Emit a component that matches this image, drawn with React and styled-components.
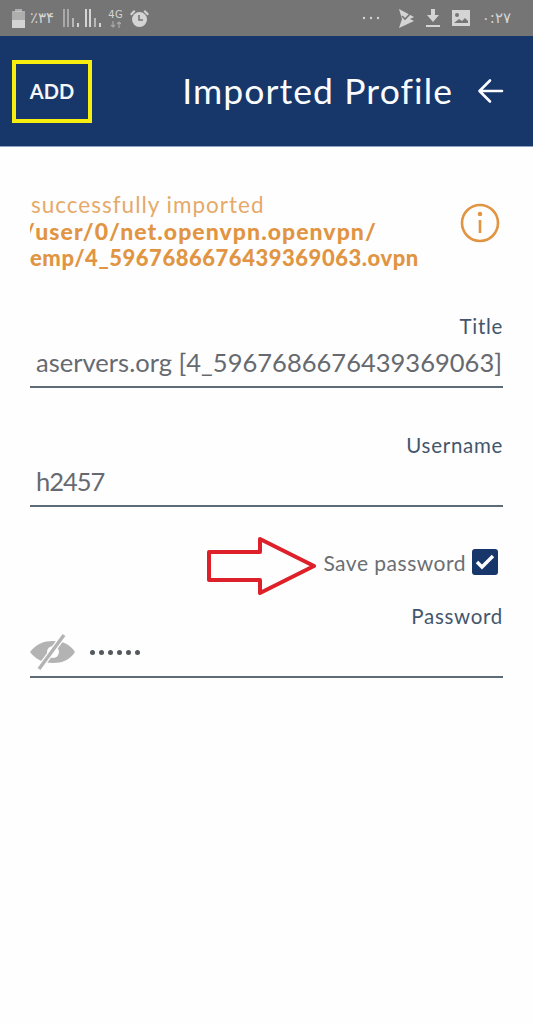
import styled, { createGlobalStyle } from "styled-components";

const GlobalStyle = createGlobalStyle`
    html, body {
        margin: 0;
        padding: 0;
        background: #fefefe;
    }
    body {
        font-family: "Lato", "Open Sans", sans-serif;
    }
`;

const Screen = styled.div`
    width: 533px;
    height: 1024px;
    overflow: hidden;
    background: #fefefe;
`;

const StatusBar = styled.div`
    height: 36px;
    background: #757575;
    display: flex;
    align-items: center;
    justify-content: space-between;
    padding: 0 22px 0 12px;
    box-sizing: border-box;
    color: #d4d4d4;
`;

const StatusGroup = styled.div`
    display: flex;
    align-items: center;
    gap: ${({ gap }) => gap || 7}px;
`;

const StatusText = styled.span`
    font-family: "DejaVu Sans", sans-serif;
    font-size: 15px;
    line-height: 16px;
    text-align: center;
    letter-spacing: 0.6px;
`;

const BatteryLabel = styled(StatusText)`
    margin: 0 2px 0 -2px;
    letter-spacing: 1px;
`;

const NetworkType = styled.span`
    display: flex;
    flex-direction: column;
    align-items: center;
    font-family: "DejaVu Sans", sans-serif;
`;

const NetworkLabel = styled.span`
    font-size: 10px;
    line-height: 12px;
    letter-spacing: 0.5px;
`;

const NetworkArrows = styled.svg`
    width: 12px;
    height: 7px;
`;

const MoreDots = styled.span`
    display: flex;
    margin-right: 7px;
`;

const Header = styled.header`
    height: 110px;
    background: #17376a;
    border-bottom: 1px solid #8ea2c4;
    display: flex;
    align-items: center;
    padding: 0 29px 0 12px;
    color: #fafcff;
`;

const AddButton = styled.button`
    width: 80px;
    height: 63px;
    box-sizing: border-box;
    margin: 0;
    padding: 0;
    background: none;
    border: 4px solid #f7ee10;
    color: #f4f6fa;
    font-family: "Lato", sans-serif;
    font-size: 20px;
    font-weight: 700;
    letter-spacing: 0.1px;
`;

const HeaderTitle = styled.h1`
    margin: 0 0 0 auto;
    font-size: 35.5px;
    font-weight: 400;
    line-height: 40px;
    letter-spacing: 1.1px;
`;

const BackIcon = styled.svg`
    width: 27px;
    height: 28px;
    margin-left: 24px;
    flex: none;
`;

const Content = styled.main`
    padding: 44px 30px 0;
`;

const Notice = styled.div`
    display: flex;
    align-items: flex-start;
    justify-content: space-between;
    height: 80px;
    padding-right: 3px;
    margin-bottom: 43px;
`;

const NoticeText = styled.div`
    width: 400px;
    overflow: hidden;
    color: #e19543;
    white-space: nowrap;
`;

const NoticeLine = styled.div`
    font-size: ${({ size }) => size}px;
    line-height: ${({ lh }) => lh}px;
    font-weight: ${({ bold }) => (bold ? 900 : 400)};
    opacity: ${({ bold }) => (bold ? 1 : 0.8)};
    margin-left: ${({ shift }) => shift || 0}px;
    letter-spacing: ${({ spacing }) => spacing}px;
`;

const InfoIcon = styled.svg`
    width: 40px;
    height: 40px;
    margin-top: 12px;
    flex: none;
`;

const Field = styled.section`
    display: flex;
    flex-direction: column;
`;

const FieldLabel = styled.label`
    align-self: flex-end;
    color: #44566c;
    font-size: 20.5px;
    line-height: 24px;
    letter-spacing: 0.7px;
`;

const FieldValue = styled.div`
    display: flex;
    align-items: center;
    height: 48px;
    padding-left: ${({ bare }) => (bare ? 0 : 6)}px;
    border-bottom: 2px solid #5d6b76;
    color: #666a70;
    font-size: 25.5px;
    letter-spacing: ${({ spacing }) => spacing || 0}px;
    white-space: nowrap;
    margin-bottom: ${({ after }) => after || 0}px;
`;

const SaveRow = styled.div`
    display: flex;
    align-items: center;
    justify-content: flex-end;
    height: 58px;
    margin-top: 26px;
    padding-right: 5px;
    margin-bottom: 13px;
`;

const Annotation = styled.svg`
    width: 110px;
    height: 60px;
    margin: 10px 6px 0 0;
    flex: none;
`;

const SaveLabel = styled.span`
    color: #6b6e72;
    font-size: 21px;
    letter-spacing: 0.5px;
`;

const CheckBox = styled.span`
    width: 26px;
    height: 26px;
    margin-left: 6px;
    border-radius: 3px;
    background: #17376a;
    display: flex;
    align-items: center;
    justify-content: center;
`;

const EyeIcon = styled.svg`
    width: 46px;
    height: 36px;
    flex: none;
`;

const Dots = styled.span`
    display: flex;
    gap: 4px;
    margin-left: 14px;
`;

const Dot = styled.i`
    width: 5px;
    height: 5px;
    border-radius: 50%;
    background: #55585c;
`;

const Icon = ({ children, w, h }) => (
    <svg width={w} height={h} viewBox={`0 0 ${w} ${h}`} fill="currentColor">{children}</svg>
);

const App = () => {
    return (
        <Screen>
            <GlobalStyle />
            <StatusBar>
                <StatusGroup>
                    {/* battery */}
                    <Icon w={13} h={19}>
                        <rect x="3" y="0" width="7" height="3" opacity="0.6" />
                        <rect x="0" y="2" width="13" height="9" opacity="0.6" />
                        <rect x="0" y="11" width="13" height="8" />
                    </Icon>
                    <BatteryLabel>٪۳۴</BatteryLabel>
                    {/* signal bars */}
                    <Icon w={38} h={18}>
                        <g opacity="0.55">
                            <rect x="0" y="0" width="2" height="18" />
                            <rect x="4" y="0" width="2" height="18" />
                        </g>
                        <rect x="9" y="9" width="2" height="9" opacity="0.7" />
                        <rect x="14" y="14" width="2" height="4" />
                        <rect x="22" y="0" width="2" height="18" />
                        <rect x="26" y="0" width="2" height="18" />
                        <rect x="31" y="9" width="2" height="9" opacity="0.7" />
                        <rect x="36" y="14" width="2" height="4" />
                    </Icon>
                    <NetworkType>
                        <NetworkLabel>4G</NetworkLabel>
                        <NetworkArrows viewBox="0 0 12 7" fill="none" stroke="#a8a8a8" strokeWidth="1.2">
                            <path d="M3 0v6M1 4l2 2 2-2M9 7V1M7 3l2-2 2 2" />
                        </NetworkArrows>
                    </NetworkType>
                    {/* alarm */}
                    <Icon w={19} h={19}>
                        <circle cx="9.5" cy="10.5" r="7.5" />
                        <path d="M9 6v5h4" stroke="#757575" strokeWidth="1.6" fill="none" />
                        <path d="M0 5l4-4 1.5 1.5-4 4zM19 5l-4-4-1.5 1.5 4 4z" />
                    </Icon>
                </StatusGroup>
                <StatusGroup gap={12}>
                    <MoreDots>
                        <Icon w={18} h={4}>
                            <circle cx="2" cy="2" r="1.2" />
                            <circle cx="9" cy="2" r="1.2" />
                            <circle cx="16" cy="2" r="1.2" />
                        </Icon>
                    </MoreDots>
                    <Icon w={15} h={19}>
                        <path d="M0 0l15 8-4 2 4 2-15 7 3-9z" />
                        <path d="M3 7l3 3 5-5" stroke="#757575" strokeWidth="1.6" fill="none" />
                    </Icon>
                    <Icon w={14} h={18}>
                        <path d="M5 0h4v6h4l-6 7-6-7h4zM0 16h14v2H0z" />
                    </Icon>
                    <Icon w={18} h={16}>
                        <path d="M0 0h18v16H0z" />
                        <circle cx="5" cy="5" r="2" fill="#757575" />
                        <path d="M2 13l5-4 3 2 3-3 3 3v2z" fill="#757575" />
                    </Icon>
                    <StatusText>۰:۲۷</StatusText>
                </StatusGroup>
            </StatusBar>

            <Header>
                <AddButton>ADD</AddButton>
                <HeaderTitle>Imported Profile</HeaderTitle>
                <BackIcon viewBox="0 0 27 28" fill="none" stroke="#fafcff" strokeWidth="2.6" strokeLinecap="round" strokeLinejoin="round">
                    <path d="M25 14H3M13 3.5L2.5 14 13 24.5" />
                </BackIcon>
            </Header>

            <Content>
                <Notice>
                    <NoticeText>
                        <NoticeLine size={22.5} lh={27} spacing={1} shift={1}>successfully imported</NoticeLine>
                        <NoticeLine bold size={23} lh={27} spacing={1.05} shift={-6}>/user/0/net.openvpn.openvpn/</NoticeLine>
                        <NoticeLine bold size={22} lh={26} spacing={0.53}>emp/4_5967686676439369063.ovpn</NoticeLine>
                    </NoticeText>
                    <InfoIcon viewBox="0 0 40 40" fill="none" stroke="#e19543" strokeWidth="2.6">
                        <circle cx="20" cy="20" r="18" />
                        <path d="M20 17v13" />
                        <circle cx="20" cy="11" r="1" fill="#e19543" />
                    </InfoIcon>
                </Notice>

                <Field>
                    <FieldLabel>Title</FieldLabel>
                    <FieldValue after={45} spacing={0.02}>aservers.org [4_5967686676439369063]</FieldValue>
                </Field>

                <Field>
                    <FieldLabel>Username</FieldLabel>
                    <FieldValue spacing={-1}>h2457</FieldValue>
                </Field>

                <SaveRow>
                    <Annotation viewBox="0 0 110 60" fill="none" stroke="#dd2029" strokeWidth="4" strokeLinejoin="round">
                        <path d="M2 15H53V2L107 29 53 56V43H2Z" />
                    </Annotation>
                    <SaveLabel>Save password</SaveLabel>
                    <CheckBox>
                        <svg width="20" height="16" viewBox="0 0 20 16" fill="none" stroke="#fff" strokeWidth="3.4">
                            <path d="M2 8l5 5L18 2" />
                        </svg>
                    </CheckBox>
                </SaveRow>

                <Field>
                    <FieldLabel>Password</FieldLabel>
                    <FieldValue bare>
                        <EyeIcon viewBox="0 0 46 36" fill="#b3b3b3">
                            <path d="M0 18C6 10 14 7 23 7c9 0 17 3 22 11-5 8-13 11-22 11C14 29 6 26 0 18z" />
                            <circle cx="23" cy="18" r="6" fill="#fefefe" />
                            <path d="M9 35L34 1" stroke="#fefefe" strokeWidth="6" />
                            <path d="M9 35L34 1" stroke="#b3b3b3" strokeWidth="3.4" />
                        </EyeIcon>
                        <Dots>
                            {[0, 1, 2, 3, 4, 5].map((i) => <Dot key={i} />)}
                        </Dots>
                    </FieldValue>
                </Field>
            </Content>
        </Screen>
    );
};

export default App;
